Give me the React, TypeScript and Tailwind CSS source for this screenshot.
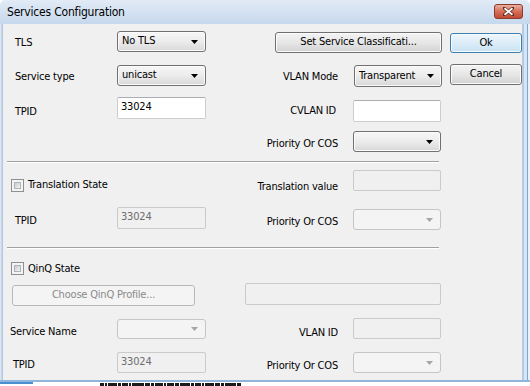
import clsx from "clsx";
import type { ReactNode } from "react";

const font = "font-['DejaVu_Sans_Condensed','Liberation_Sans',sans-serif]";

const Arrow = ({ disabled }: { disabled?: boolean }) => (
  <svg width="7" height="4" viewBox="0 0 7 4" className="shrink-0">
    <path d="M0 0H7L3.5 4Z" fill={disabled ? "#a6a6a6" : "#000"} />
  </svg>
);

const Combo = ({ value, disabled, className }: { value?: string; disabled?: boolean; className?: string }) => (
  <div
    className={clsx(
      "flex items-center justify-between rounded-[3px] border pl-[4px] pr-[7px]",
      disabled
        ? "border-[#c5c5c5] bg-[#f4f4f4]"
        : "border-[#707070] bg-linear-to-b from-[#f7f7f7] via-[#ececec] to-[#d8d8d8] shadow-[inset_0_0_0_1px_#fbfbfb]",
      className,
    )}
  >
    <span>{value}</span>
    <Arrow disabled={disabled} />
  </div>
);

const Field = ({ value, disabled, className }: { value?: string; disabled?: boolean; className?: string }) => (
  <div
    className={clsx(
      "rounded-[2px] border pl-[3px] pt-[2px] leading-[14px]",
      disabled ? "border-[#cacaca] bg-[#f0f0f0] text-[#6d6d6d]" : "border-[#cdcdcd] border-t-[#abadb3] bg-white",
      className,
    )}
  >
    {value}
  </div>
);

const Btn = ({ children, kind = "normal", className }: { children: ReactNode; kind?: "normal" | "focus" | "disabled"; className?: string }) => (
  <div
    className={clsx(
      "flex items-center justify-center rounded-[3px] border",
      kind === "normal" && "border-[#707070] bg-linear-to-b from-[#f3f3f3] via-[#e7e7e7] to-[#d2d2d2] shadow-[inset_0_0_0_1px_#fcfcfc]",
      kind === "focus" && "border-[#3c7fb1] bg-linear-to-b from-[#eef6fc] via-[#dcedf8] to-[#c8e2f3] shadow-[inset_0_0_0_1px_#f6fbfe]",
      kind === "disabled" && "border-[#b5b9bc] bg-[#f4f4f4] text-[#8a8a8a]",
      className,
    )}
  >
    {children}
  </div>
);

const Check = () => (
  <div className="size-[13px] border border-[#8e8f8f] bg-[#f4f4f4] p-[2px]">
    <div className="size-full border border-[#b0b3b8] bg-linear-to-br from-[#c9ccd1] to-[#f3f3f3]" />
  </div>
);

const RightLabel = ({ children, pr, mt }: { children: ReactNode; pr: string; mt: string }) => (
  <div className={clsx("w-[147px] text-right leading-[14px]", pr, mt)}>{children}</div>
);

// scraps of the window behind the dialog, peeking out under its bottom edge
const scraps = [4, 2, 9, 3, 6, 2, 12, 5, 3, 8, 2, 7, 4, 10, 3, 6, 2, 9, 5, 3, 11, 4];

export default function App() {
  return (
    <div className={clsx("w-[530px] h-[386px] overflow-hidden bg-white text-[11px] tracking-[-0.2px] text-black", font)}>
      <div className="flex h-[382px] flex-col">
        {/* title bar */}
        <div className="flex h-[24px] items-center justify-between rounded-t-[5px] bg-linear-to-b from-[#e2ebf6] to-[#c6d8ed] pl-[7px] pr-[7px]">
          <span className="text-[12px] leading-none">Services Configuration</span>
          <div className="mt-[-1px] flex h-[15px] w-[29px] items-center justify-center rounded-[3px] border border-[#8b3b2c] bg-linear-to-b from-[#eab0a2] via-[#d66d56] to-[#c24a33]">
            <svg width="11" height="9" viewBox="0 0 11 9">
              <path d="M1 1L10 8M10 1L1 8" stroke="#5a2a22" strokeWidth="3.2" strokeLinecap="square" />
              <path d="M1.5 1.3L9.5 7.7M9.5 1.3L1.5 7.7" stroke="#fff" strokeWidth="1.8" />
            </svg>
          </div>
        </div>

        <div className="flex h-[356px]">
          <div className="w-[3px] bg-linear-to-r from-[#e6eef8] to-[#a9c0dc]" />

          {/* dialog body */}
          <div className="flex w-[519px] flex-col bg-[#f0f0f0]">
            {/* TLS */}
            <div className="mt-[7px] flex h-[23px] items-start">
              <div className="mt-[5px] w-[114px] pl-[12px] leading-[14px]">TLS</div>
              <Combo value="No TLS" className="h-[21px] w-[89px]" />
              <Btn className="ml-[69px] mt-[1px] h-[21px] w-[167px]">Set Service Classificati...</Btn>
              <Btn kind="focus" className="ml-[8px] mt-[2px] h-[20px] w-[72px]">Ok</Btn>
            </div>

            {/* service type / vlan mode */}
            <div className="mt-[10px] flex h-[23px] items-start">
              <div className="mt-[6px] w-[114px] pl-[12px] leading-[14px]">Service type</div>
              <Combo value="unicast" className="mt-[1px] h-[21px] w-[89px]" />
              <div className="mt-[6px] w-[148px] pr-[16px] text-right leading-[14px]">VLAN Mode</div>
              <Combo value="Transparent" className="mt-[1px] h-[22px] w-[88px]" />
              <Btn className="ml-[8px] h-[21px] w-[72px]">Cancel</Btn>
            </div>

            {/* tpid / cvlan */}
            <div className="mt-[10px] flex h-[25px] items-start">
              <div className="mt-[8px] w-[114px] pl-[12px] leading-[14px]">TPID</div>
              <Field value="33024" className="h-[22px] w-[89px]" />
              <RightLabel pr="pr-[17px]" mt="mt-[7px]">CVLAN ID</RightLabel>
              <Field className="mt-[3px] h-[22px] w-[88px]" />
            </div>

            {/* priority */}
            <div className="mt-[9px] flex h-[22px] items-start">
              <div className="w-[203px]" />
              <RightLabel pr="pr-[15px]" mt="mt-[6px]">Priority Or COS</RightLabel>
              <Combo className="h-[21px] w-[88px]" />
            </div>

            <div className="ml-[4px] mt-[8px] w-[432px] border-t border-b border-t-[#a0a0a0] border-b-white" />

            {/* translation */}
            <div className="mt-[7px] flex h-[21px] items-start">
              <div className="mt-[8px] flex w-[203px] items-center pl-[8px]">
                <Check />
                <span className="ml-[4px] leading-[14px]">Translation State</span>
              </div>
              <RightLabel pr="pr-[15px]" mt="mt-[10px]">Translation value</RightLabel>
              <Field disabled className="h-[21px] w-[88px]" />
            </div>

            <div className="mt-[16px] flex h-[23px] items-start">
              <div className="mt-[7px] w-[114px] pl-[12px] leading-[14px]">TPID</div>
              <Field disabled value="33024" className="h-[22px] w-[89px]" />
              <RightLabel pr="pr-[15px]" mt="mt-[8px]">Priority Or COS</RightLabel>
              <Combo disabled className="mt-[2px] h-[21px] w-[88px]" />
            </div>

            <div className="ml-[4px] mt-[17px] w-[432px] border-t border-b border-t-[#a0a0a0] border-b-white" />

            {/* qinq */}
            <div className="mt-[13px] flex h-[13px] items-center pl-[8px]">
              <Check />
              <span className="ml-[4px] leading-[14px]">QinQ State</span>
            </div>

            <div className="mt-[8px] flex h-[23px] items-start">
              <Btn kind="disabled" className="ml-[9px] mt-[2px] h-[21px] w-[183px]">Choose QinQ Profile...</Btn>
              <Field disabled className="ml-[50px] h-[22px] w-[196px]" />
            </div>

            <div className="mt-[12px] flex h-[22px] items-start">
              <div className="mt-[7px] w-[114px] pl-[7px] leading-[14px]">Service Name</div>
              <Combo disabled className="mt-[1px] h-[20px] w-[89px]" />
              <RightLabel pr="pr-[15px]" mt="mt-[8px]">VLAN ID</RightLabel>
              <Field disabled className="h-[21px] w-[88px]" />
            </div>

            <div className="mt-[11px] flex h-[22px] items-start">
              <div className="mt-[7px] w-[114px] pl-[10px] leading-[14px]">TPID</div>
              <Field disabled value="33024" className="mt-[1px] h-[21px] w-[89px]" />
              <RightLabel pr="pr-[15px]" mt="mt-[8px]">Priority Or COS</RightLabel>
              <Combo disabled className="mt-[1px] h-[21px] w-[88px]" />
            </div>
          </div>

          {/* right frame */}
          <div className="flex w-[8px]">
            <div className="w-[2px] bg-[#b4cbe4]" />
            <div className="w-[3px] bg-[#d6e4f3]" />
            <div className="w-[1px] bg-[#7ea5cf]" />
            <div className="w-[2px] bg-[#e9f0f8]" />
          </div>
        </div>

        <div className="h-[2px] bg-[#8fb5dc]" />
      </div>

      {/* window underneath */}
      <div className="flex h-[4px] items-start">
        <div className="h-[2px] w-[33px] bg-[#4a90d0]" />
        <div className="ml-[67px] mt-[1px] flex gap-[1px]">
          {scraps.map((w, i) => (
            <div key={i} className="h-[3px] bg-[#1a1a1a]" style={{ width: w }} />
          ))}
        </div>
      </div>
    </div>
  );
}
